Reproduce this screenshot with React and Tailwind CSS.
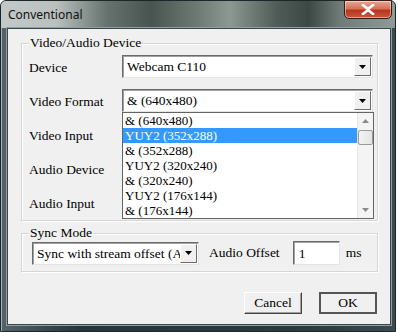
import React from "react";

const SERIF = "font-['Liberation_Serif',serif]";

/* ===== DROPDOWN LIST DATA ===== */
const FORMATS = [
  "& (640x480)",
  "YUY2 (352x288)",
  "& (352x288)",
  "YUY2 (320x240)",
  "& (320x240)",
  "YUY2 (176x144)",
  "& (176x144)",
];

const Arrow = ({ color = "#000" }) => (
  <svg width="7" height="4" viewBox="0 0 7 4">
    <path d="M0 0h7L3.5 4z" fill={color} />
  </svg>
);

/* ===== COMBO BOX ===== */
const Combo = ({ value, className = "" }) => (
  <div
    className={`flex h-[23px] bg-white border border-t-[#6b6b6b] border-l-[#6b6b6b] border-r-[#e4e4e4] border-b-[#e4e4e4] shadow-[inset_1px_1px_0_#a0a0a0] ${className}`}
  >
    <div className="flex-1 pl-[4px] pt-[2px] text-[13.5px] leading-[17px] overflow-hidden whitespace-nowrap">
      {value}
    </div>
    <div className="w-[17px] my-[1px] mr-[1px] flex items-center justify-center bg-[#f0f0f0] border border-t-white border-l-white border-r-[#6b6b6b] border-b-[#6b6b6b]">
      <Arrow />
    </div>
  </div>
);

/* ===== GROUP BOX ===== */
const Group = ({ title, className = "", children }) => (
  <div className={`relative border border-[#d5d5d5] shadow-[inset_1px_1px_0_#fff,1px_1px_0_#fff] ${className}`}>
    <span className="absolute -top-[9px] left-[7px] px-[1px] bg-[#f0f0f0] text-[13.5px] leading-[16px]">
      {title}
    </span>
    {children}
  </div>
);

const Button = ({ label, primary }) => (
  <div
    className={`w-[58px] h-[22px] flex items-center justify-center bg-[#f0f0f0] text-[13.5px] ${
      primary
        ? "border-2 border-[#555]"
        : "border border-t-white border-l-white border-r-[#444] border-b-[#444] shadow-[inset_-1px_-1px_0_#a0a0a0]"
    }`}
  >
    {label}
  </div>
);

export default function App() {
  return (
    <div className="w-[398px] h-[332px] bg-white">
      {/* ===== WINDOW FRAME ===== */}
      <div className="w-[396px] h-[332px] flex flex-col rounded-t-[6px] border border-[#1d2628] bg-[linear-gradient(to_right,#56646a,#27353a_20%,#2d3b3f_80%,#3d4b50)] shadow-[inset_1px_1px_0_#a5b2b5]">
        {/* ===== TITLE BAR ===== */}
        <div className="h-[27px] flex justify-between rounded-t-[5px] bg-[linear-gradient(to_right,#c3c9c8_0%,#b9c0be_14%,#66726d_27%,#48544f_38%,#6e7b74_50%,#8c9992_58%,#4f5c57_70%,#3c4844_78%,#6f7b77_86%,#8f9b97_100%)]">
          <span className="pl-[7px] pt-[5px] text-[12px] font-['Noto_Sans',sans-serif] text-[#111]">
            Conventional
          </span>
          <div className="w-[48px] h-[19px] mr-[3px] -mt-[1px] flex items-center justify-center rounded-b-[5px] border border-[#3c1a14] bg-[linear-gradient(to_bottom,#e5a896_0%,#d5715a_45%,#b8361c_55%,#c9553a_100%)] shadow-[inset_0_0_0_1px_rgba(255,255,255,0.45)]">
            <svg width="14" height="11" viewBox="0 0 14 11">
              <path
                d="M2 1l5 4 5-4M2 10l5-4 5 4"
                stroke="#fff"
                strokeWidth="2.6"
                fill="none"
                strokeLinecap="square"
              />
            </svg>
          </div>
        </div>

        {/* ===== CLIENT AREA ===== */}
        <div className={`relative ml-[6px] mr-[4px] h-[297px] border border-[#3b4648] shadow-[0_0_0_1px_#8fa0a4] bg-[#f0f0f0] text-black ${SERIF}`}>
          {/* ===== VIDEO/AUDIO DEVICE ===== */}
          <Group title="Video/Audio Device" className="ml-[13px] mr-[12px] mt-[14px]">
            <div className="flex flex-col gap-[11px] pt-[11px] pb-[6px] pl-[7px] pr-[4px]">
              <div className="flex items-center h-[23px]">
                <span className="w-[93px] text-[13.5px] pt-[3px]">Device</span>
                <Combo value="Webcam C110" className="flex-1" />
              </div>
              <div className="flex items-center h-[23px]">
                <span className="w-[93px] text-[13.5px] pt-[3px]">Video Format</span>
                <Combo value="& (640x480)" className="flex-1" />
              </div>
              <div className="flex items-center h-[23px]">
                <span className="w-[93px] text-[13.5px] pt-[3px]">Video Input</span>
              </div>
              <div className="flex items-center h-[23px]">
                <span className="w-[93px] text-[13.5px] pt-[3px]">Audio Device</span>
              </div>
              <div className="flex items-center h-[23px]">
                <span className="w-[93px] text-[13.5px] pt-[3px]">Audio Input</span>
              </div>
            </div>

            {/* ===== OPEN DROPDOWN LIST ===== */}
            <div className="absolute left-[100px] top-[68px] w-[252px] h-[107px] flex bg-white border border-[#646464]">
              <div className="flex-1 flex flex-col">
                {FORMATS.map((f, i) => (
                  <div
                    key={f}
                    className={`h-[15px] pl-[2px] text-[13px] leading-[15px] whitespace-nowrap ${
                      i === 1 ? "bg-[#3399ff] text-white" : ""
                    }`}
                  >
                    {f}
                  </div>
                ))}
              </div>
              <div className="w-[16px] flex flex-col items-center bg-[#f4f4f4] border-l border-[#e6e6e6]">
                <div className="h-[17px] flex items-center justify-center rotate-180">
                  <Arrow color="#8a8a8a" />
                </div>
                <div className="w-[15px] h-[15px] border border-[#9a9a9a] rounded-[2px] bg-[linear-gradient(to_right,#f3f3f3,#e4e4e4)]" />
                <div className="flex-1" />
                <div className="h-[17px] flex items-center justify-center">
                  <Arrow color="#8a8a8a" />
                </div>
              </div>
            </div>
          </Group>

          {/* ===== SYNC MODE ===== */}
          <Group title="Sync Mode" className="ml-[13px] mr-[12px] mt-[12px]">
            <div className="flex items-center h-[37px] pl-[10px] pt-[1px]">
              <Combo value="Sync with stream offset (Auto)" className="w-[167px] h-[21px]" />
              <span className="ml-[10px] text-[13.5px]">Audio Offset</span>
              <div className="ml-[13px] w-[47px] h-[24px] bg-white border border-t-[#6b6b6b] border-l-[#6b6b6b] border-r-[#e4e4e4] border-b-[#e4e4e4] shadow-[inset_1px_1px_0_#a0a0a0] pl-[5px] pt-[2px] text-[13.5px]">
                1
              </div>
              <span className="ml-[6px] text-[13.5px]">ms</span>
            </div>
          </Group>

          {/* ===== BUTTONS ===== */}
          <div className="flex justify-end gap-[17px] mr-[13px] mt-[20px]">
            <Button label="Cancel" />
            <Button label="OK" primary />
          </div>
        </div>
      </div>
    </div>
  );
}
